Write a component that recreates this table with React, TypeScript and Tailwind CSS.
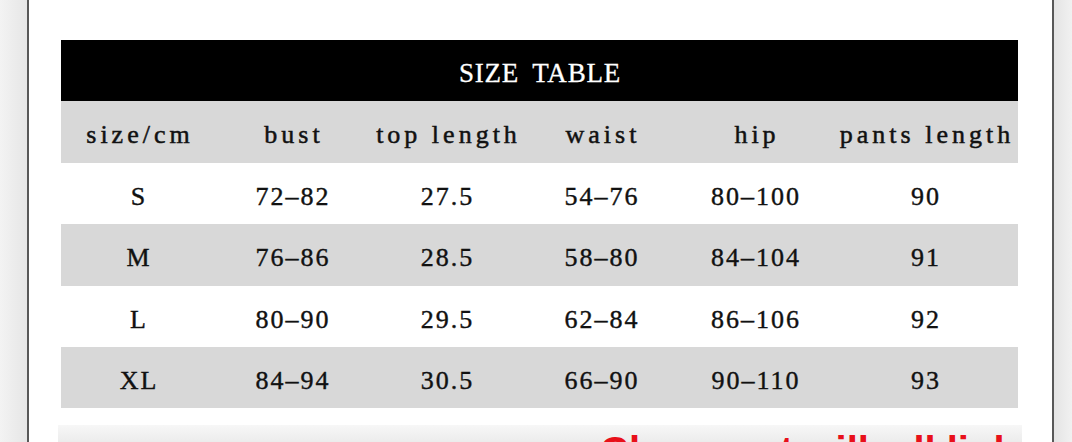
import React from "react";

const header = ["size/cm", "bust", "top length", "waist", "hip", "pants length"];
const rows = [
  ["S", "72-82", "27.5", "54-76", "80-100", "90"],
  ["M", "76-86", "28.5", "58-80", "84-104", "91"],
  ["L", "80-90", "29.5", "62-84", "86-106", "92"],
  ["XL", "84-94", "30.5", "66-90", "90-110", "93"],
];
const heights = ["h-[61px]", "h-[62px]", "h-[61px]", "h-[61px]"];
const cols = "grid grid-cols-[154px_154px_155px_154px_154px_186px]";

function Cell({ text, word }: { text: string; word?: boolean }) {
  return (
    <div className="flex items-center justify-center pt-[6px]">
      <span
        className={`whitespace-nowrap text-[26px] leading-none text-[#111] ${
          word
            ? "tracking-[4px] pl-[4px] [-webkit-text-stroke:0.5px_#111]"
            : "tracking-[2px] pl-[2px] [-webkit-text-stroke:0.4px_#111]"
        }`}
      >
        {text.replace(/-/g, "\u2013")}
      </span>
    </div>
  );
}

export default function App() {
  return (
    <div
      className="flex h-[442px] w-[1072px] overflow-hidden bg-[#f0f0f0]"
      style={{ fontFamily: '"Liberation Serif", "Times New Roman", serif' }}
    >
      <div className="w-[27px] shrink-0 bg-gradient-to-r from-[#f3f3f3] to-[#e6e6e6]" />
      <div className="flex w-[1027px] shrink-0 flex-col border-x-2 border-[#585858] bg-white pl-[32px] pr-[34px] pt-[40px]">
        <div className="flex w-[957px] flex-col">
          <div className="flex h-[61px] items-center justify-center bg-black pt-[6px]">
            <span className="whitespace-nowrap pl-[1px] text-[27px] leading-none tracking-[0.8px] text-white [word-spacing:6px] [-webkit-text-stroke:0.3px_#fff]">
              SIZE TABLE
            </span>
          </div>
          <div className={`${cols} h-[62px] bg-[#d8d8d8]`}>
            {header.map((h) => (
              <Cell key={h} text={h} word />
            ))}
          </div>
          {rows.map((r, i) => (
            <div
              key={r[0]}
              className={`${cols} ${heights[i]} ${i % 2 === 1 ? "bg-[#d8d8d8]" : "bg-white"}`}
            >
              {r.map((c, j) => (
                <Cell key={j} text={c} />
              ))}
            </div>
          ))}
        </div>
        <div className="ml-[-3px] mt-[17px] h-[20px] w-[964px] overflow-hidden bg-gradient-to-b from-[#f7f7f7] to-[#ececec]">
          <div
            className="pl-[542px] pt-[6px] text-[40px] font-bold leading-[1] whitespace-nowrap text-[#e8101a]"
            style={{ fontFamily: '"Liberation Sans", Arial, sans-serif' }}
          >
            Choose at will, all link
          </div>
        </div>
      </div>
      <div className="flex-1 bg-gradient-to-r from-[#e4e4e4] to-[#f1f1f1]" />
    </div>
  );
}
